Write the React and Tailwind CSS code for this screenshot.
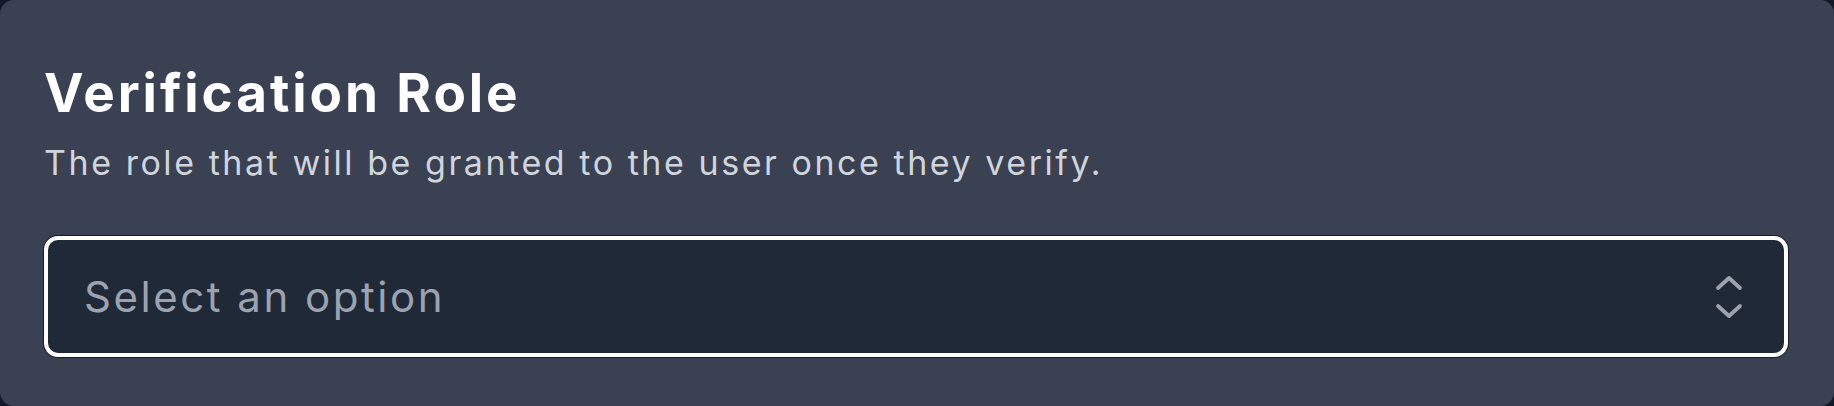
import { useState } from "react";

function UpDownIcon() {
  return (
    <svg width="28" height="44" viewBox="0 0 28 44" fill="none" aria-hidden="true">
      <path
        d="M3 13 14 3l11 10M3 31l11 10 11-10"
        stroke="currentColor"
        strokeWidth="3.8"
        strokeLinecap="round"
        strokeLinejoin="round"
      />
    </svg>
  );
}

export default function App() {
  const [role, setRole] = useState("");

  return (
    <div className="w-full h-[406px] bg-[#111827] font-['Inter','Liberation_Sans',sans-serif]">
      <div className="h-full bg-[#394152] rounded-[14px] pl-[44px] pr-[46px] pt-[67px]">
        <h2 className="text-[53px] leading-[52px] font-bold text-white tracking-[0.055em]">
          Verification Role
        </h2>
        <p className="mt-[24px] text-[34px] leading-[40px] text-[#d1d5db] tracking-[0.075em]">
          The role that will be granted to the user once they verify.
        </p>

        <button
          type="button"
          onClick={() => setRole(role)}
          className="mt-[53px] w-full h-[121px] flex items-center justify-between bg-[#1f2937] border-4 border-white rounded-[14px] shadow-[0_0_0_1px_rgba(0,0,0,0.55)] pl-[36px] pr-[41px] cursor-pointer"
        >
          <span className="text-[42px] leading-none text-[#9ca3af] tracking-[0.06em]">
            {role || "Select an option"}
          </span>
          <span className="text-[#9ca3af]">
            <UpDownIcon />
          </span>
        </button>
      </div>
    </div>
  );
}
